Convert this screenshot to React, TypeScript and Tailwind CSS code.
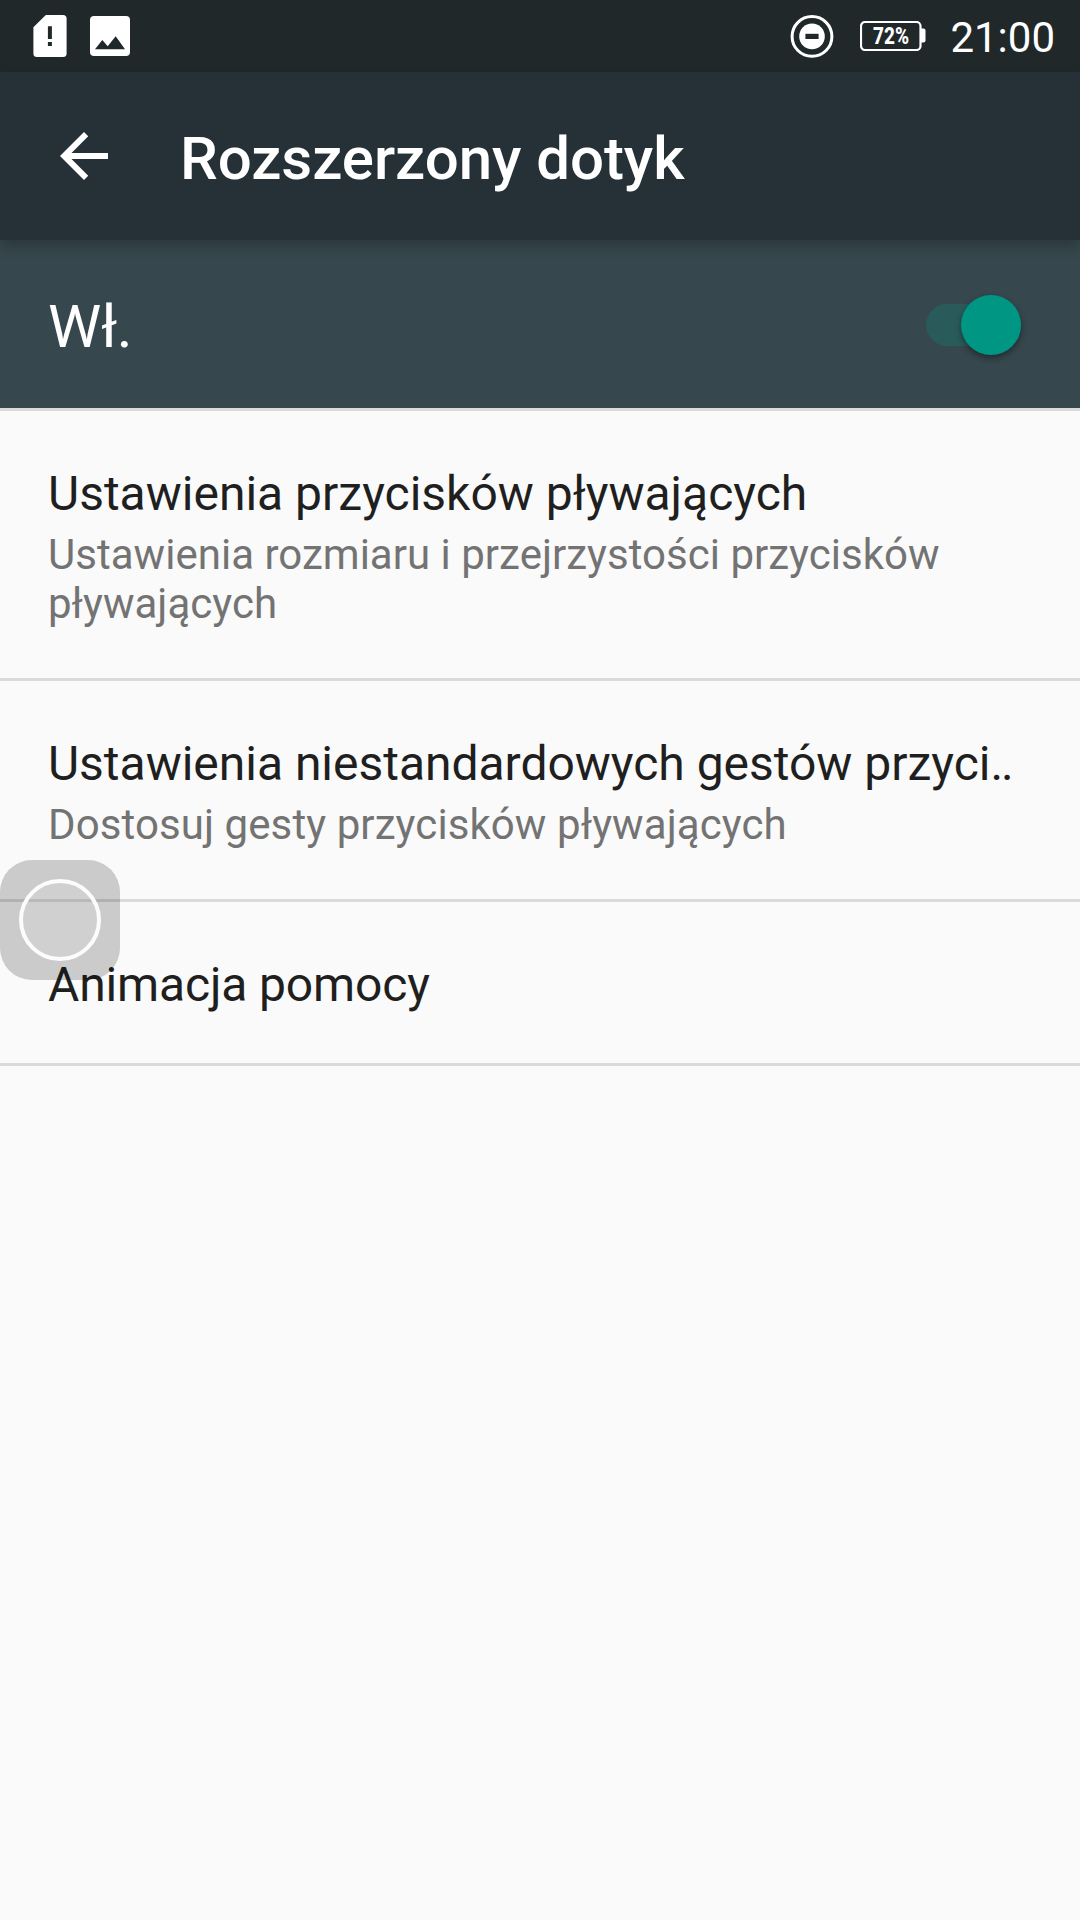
import { MdArrowBack } from "react-icons/md"

const items = [
  {
    title: "Ustawienia przycisków pływających",
    dots: "",
    summary: "Ustawienia rozmiaru i przejrzystości przycisków pływających",
    height: "h-[270px]",
    titleTracking: "",
    summaryTracking: "tracking-[0.02px]",
  },
  {
    title: "Ustawienia niestandardowych gestów przyci",
    dots: "..",
    summary: "Dostosuj gesty przycisków pływających",
    height: "h-[221px]",
    titleTracking: "tracking-[-0.02px]",
    summaryTracking: "tracking-[0.09px]",
  },
  {
    title: "Animacja pomocy",
    dots: "",
    summary: "",
    height: "h-[164px]",
    titleTracking: "tracking-[-0.15px]",
    summaryTracking: "",
  },
]

function SimAlertIcon() {
  return (
    <svg width="34" height="42" viewBox="0 0 34 42">
      <path d="M12.8 0H30a3.6 3.6 0 0 1 3.6 3.6v34.8a3.6 3.6 0 0 1-3.6 3.6H4a3.6 3.6 0 0 1-3.6-3.6V12.2z" fill="#fff" />
      <path d="M14.9 11.2h4v12.8h-4zM14.9 27h4v4h-4z" fill="#20282a" />
    </svg>
  )
}

function PictureIcon() {
  return (
    <svg width="40" height="40" viewBox="0 0 40 40">
      <rect width="40" height="40" rx="4" fill="#fff" />
      <path d="M5 33.3l7.3-9.3 5.4 6.3 8-10L35 33.3z" fill="#20282a" />
    </svg>
  )
}

function DoNotDisturbIcon() {
  return (
    <svg width="44" height="44" viewBox="0 0 44 44">
      <circle cx="22" cy="22.4" r="19.9" fill="none" stroke="#fff" strokeWidth="3" />
      <circle cx="22" cy="22.4" r="12.8" fill="#fff" />
      <path d="M15.4 19.8h13.2v5.2H15.4z" fill="#20282a" />
    </svg>
  )
}

function BatteryIcon() {
  return (
    <svg width="66" height="30" viewBox="0 0 66 30">
      <rect x="1" y="1" width="59.5" height="28" rx="4" fill="none" stroke="#fff" strokeWidth="2.2" />
      <path d="M61 7.5h2.5a2 2 0 0 1 2 2v10a2 2 0 0 1-2 2H61z" fill="#fff" />
      <text
        x="13"
        y="23.3"
        fontSize="23.5"
        fontWeight="800"
        fill="#fff"
        textLength="36"
        lengthAdjust="spacingAndGlyphs"
      >
        72%
      </text>
    </svg>
  )
}

function StatusBar() {
  return (
    <div className="flex h-[72px] items-center bg-[#20282a] pl-[33px] pr-[25px] text-white">
      <div className="flex items-center gap-[23px]">
        <SimAlertIcon />
        <PictureIcon />
      </div>
      <div className="ml-auto flex items-center">
        <DoNotDisturbIcon />
        <div className="ml-[26px]">
          <BatteryIcon />
        </div>
        <span className="ml-6 pt-[2px] text-[42px] leading-[49px]">21:00</span>
      </div>
    </div>
  )
}

export default function App() {
  return (
    <div className="relative h-[1920px] w-[1080px] overflow-hidden bg-[#fafafa] font-['Roboto',sans-serif]">
      <StatusBar />

      <header className="relative z-10 flex h-[168px] items-center bg-[#253137] px-12 text-white shadow-[0_6px_12px_rgba(0,0,0,0.22)]">
        <MdArrowBack size={72} />
        <h1 className="ml-[60px] pt-[5px] text-[60px] leading-[70px] font-medium tracking-[-0.06px]">Rozszerzony dotyk</h1>
      </header>

      <div className="flex h-[168px] items-center justify-between bg-[#36474d] pl-12 pr-[59px] text-white">
        <span className="pt-[5px] text-[60px] leading-[70px] tracking-[-0.3px]">Wł.</span>
        <button
          type="button"
          role="switch"
          aria-checked="true"
          aria-label="Wł."
          className="mt-px flex h-[42px] w-[95px] items-center justify-end rounded-full bg-[#2a5b5b]"
        >
          <span className="size-[60px] shrink-0 rounded-full bg-[#009684] shadow-[0_3px_6px_rgba(0,0,0,0.4)]" />
        </button>
      </div>

      <ul className="border-t-3 border-[#dadada]">
        {items.map((item) => (
          <li key={item.title} className={`${item.height} border-b-3 border-[#dadada] px-12 pt-[54px]`}>
            <p className={`text-[48px] leading-[57px] whitespace-nowrap text-[#1f1f1f] ${item.titleTracking}`}>
              {item.title}
              {item.dots && <span className="tracking-[-2px]">{item.dots}</span>}
            </p>
            {item.summary && (
              <p className={`mt-[8px] text-[42px] leading-[49px] text-[#737373] ${item.summaryTracking}`}>
                {item.summary}
              </p>
            )}
          </li>
        ))}
      </ul>

      {/* floating touch button */}
      <div className="absolute top-[860px] left-0 flex size-[120px] items-center justify-center rounded-[32px] bg-black/19">
        <div className="size-[82px] rounded-full border-4 border-[#fcfcfc] bg-white/10" />
      </div>
    </div>
  )
}
